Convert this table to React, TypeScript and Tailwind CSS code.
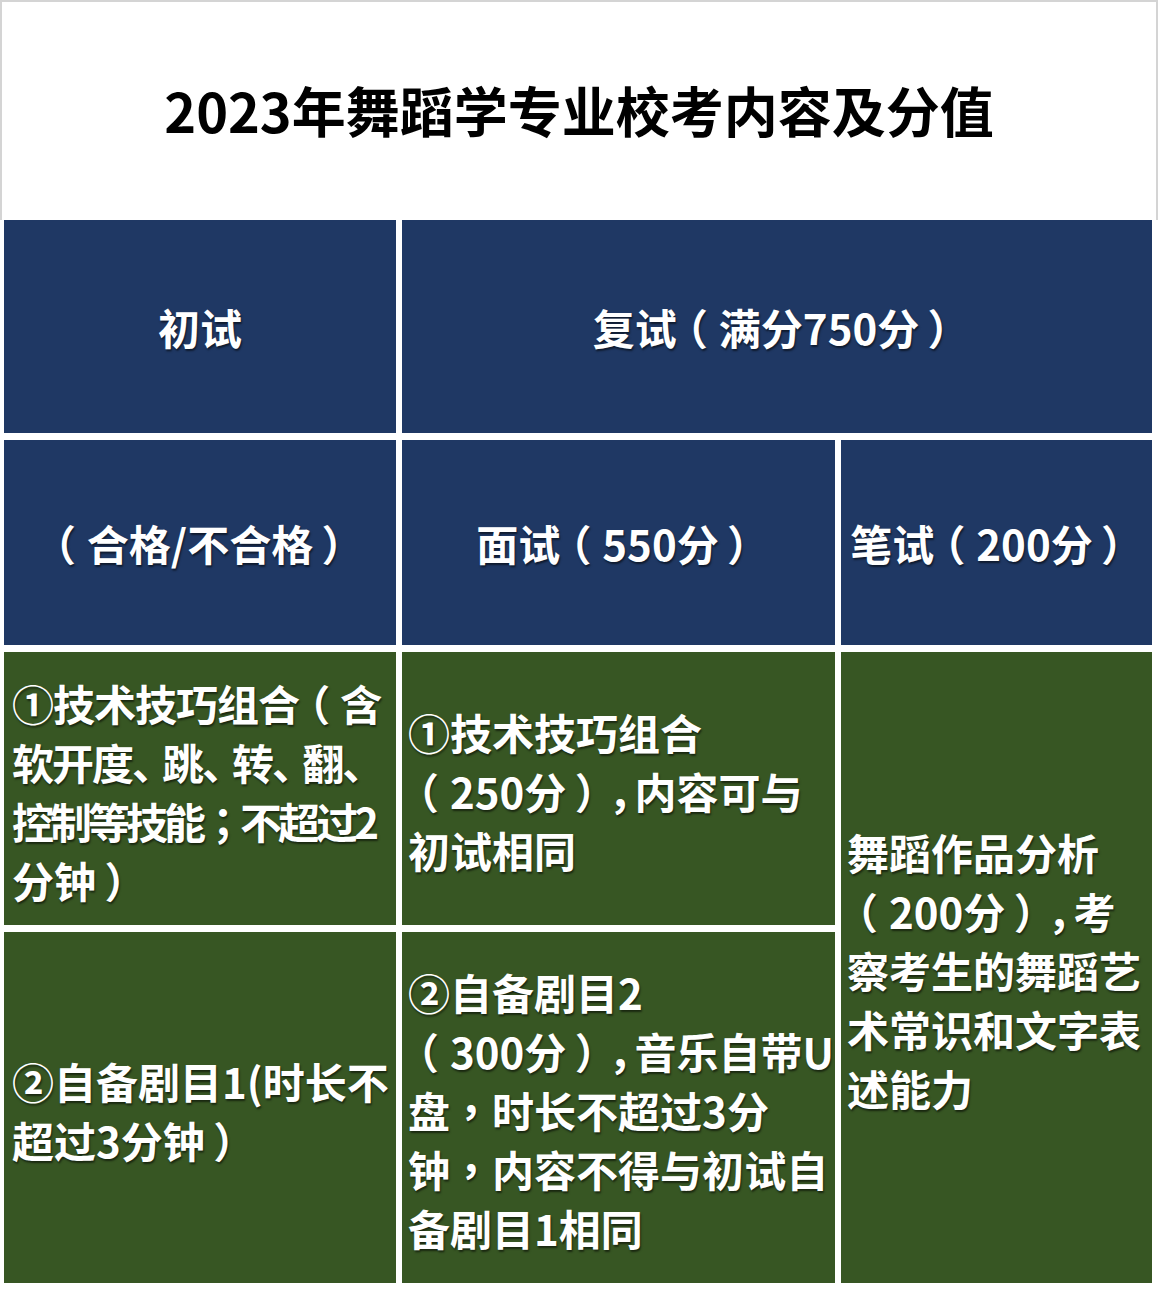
import type { ReactNode } from 'react';

// Nudges full-width punctuation so it sits like the original slide font
function t(s: string): ReactNode[] {
  const chars = s.split('');
  return chars.map((ch, i) => {
    if (ch === '（')
      return (
        <span key={i} className="inline-block -translate-x-[0.26em]">
          {ch}
        </span>
      );
    if (ch === '）')
      return (
        <span key={i} className="inline-block translate-x-[0.2em]">
          {ch}
        </span>
      );
    if (ch === '，' && chars[i - 1] === '）')
      return (
        <span key={i} className="inline-block mr-[-0.38em]">
          {ch}
        </span>
      );
    if (ch === '，' || ch === '；')
      return (
        <span key={i} className="font-['Noto_Sans_CJK_TC']">
          {ch}
        </span>
      );
    if (ch === '、')
      return (
        <span key={i} className="inline-block mr-[-10px]">
          {ch}
        </span>
      );
    return ch;
  });
}

export default function App() {
  const cell =
    'flex flex-col justify-center text-white font-bold text-[42px] leading-[59px] [text-shadow:1px_2px_2px_rgba(0,0,0,0.55)]';
  const navy = 'bg-[#1f3864]';
  const green = 'bg-[#375623]';

  return (
    <div className="w-[1158px] h-[1290px] bg-white font-['Noto_Sans_CJK_SC','Noto_Sans',sans-serif]">
      <div className="h-[220px] border-t-2 border-l-2 border-r-2 border-[#d4d4d4] flex items-center justify-center pb-[2px]">
        <h1 className="text-[54px] font-bold text-black leading-none">2023年舞蹈学专业校考内容及分值</h1>
      </div>

      <div className="grid grid-cols-[392px_433px_311px] grid-rows-[213px_205px_273px_351px] gap-x-[6px] gap-y-[7px] pl-[4px]">
        <div className={`${navy} ${cell} items-center`}>
          <span>初试</span>
        </div>
        <div className={`${navy} ${cell} items-center col-span-2`}>
          <span>{t('复试（满分750分）')}</span>
        </div>

        <div className={`${navy} ${cell} items-center`}>
          <span>{t('（合格/不合格）')}</span>
        </div>
        <div className={`${navy} ${cell} items-center`}>
          <span>{t('面试（550分）')}</span>
        </div>
        <div className={`${navy} ${cell} items-center pr-[8px]`}>
          <span>{t('笔试（200分）')}</span>
        </div>

        <div className={`${green} ${cell} pl-[8px] whitespace-nowrap pt-[4px]`}>
          <span className="tracking-[-1px]">{t('①技术技巧组合（含')}</span>
          <span className="tracking-[-2px]">{t('软开度、跳、转、翻、')}</span>
          <span className="tracking-[-4px]">{t('控制等技能；不超过2')}</span>
          <span>{t('分钟）')}</span>
        </div>
        <div className={`${green} ${cell} pl-[6px] whitespace-nowrap pt-[4px]`}>
          <span>①技术技巧组合</span>
          <span>{t('（250分），内容可与')}</span>
          <span>初试相同</span>
        </div>
        <div className={`${green} ${cell} pl-[6px] whitespace-nowrap row-span-2 pt-[4px]`}>
          <span>舞蹈作品分析</span>
          <span>{t('（200分），考')}</span>
          <span>察考生的舞蹈艺</span>
          <span>术常识和文字表</span>
          <span>述能力</span>
        </div>

        <div className={`${green} ${cell} pl-[8px] whitespace-nowrap pt-[4px]`}>
          <span>②自备剧目1(时长不</span>
          <span>{t('超过3分钟）')}</span>
        </div>
        <div className={`${green} ${cell} pl-[6px] whitespace-nowrap pt-[4px]`}>
          <span>②自备剧目2</span>
          <span>{t('（300分），音乐自带U')}</span>
          <span>{t('盘，时长不超过3分')}</span>
          <span>{t('钟，内容不得与初试自')}</span>
          <span>备剧目1相同</span>
        </div>
      </div>
    </div>
  );
}
